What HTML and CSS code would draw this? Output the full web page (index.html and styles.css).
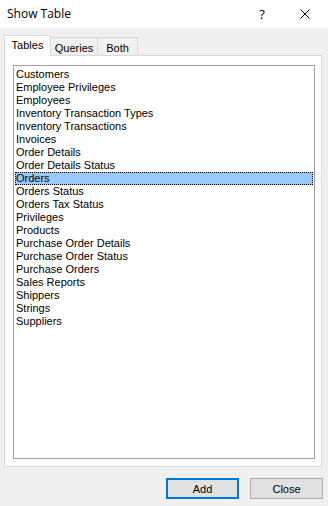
FILE: index.html
```html
<!DOCTYPE html>
<html>
<head>
<meta charset="utf-8">
<link rel="stylesheet" href="styles.css">
</head>
<body>
<div class="window">
  <div class="titlebar">
    <span class="title">Show Table</span>
    <span class="help">?</span>
    <span class="close"><svg width="10" height="10" viewBox="0 0 10 10"><path d="M0.5 0.5 L9.5 9.5 M9.5 0.5 L0.5 9.5" stroke="#000" stroke-width="1" fill="none"/></svg></span>
  </div>
  <div class="content">
    <div class="tabs">
      <div class="tab active">Tables</div>
      <div class="tab">Queries</div>
      <div class="tab">Both</div>
    </div>
    <div class="panel">
      <ul class="list">
        <li>Customers</li>
        <li>Employee Privileges</li>
        <li>Employees</li>
        <li>Inventory Transaction Types</li>
        <li>Inventory Transactions</li>
        <li>Invoices</li>
        <li>Order Details</li>
        <li>Order Details Status</li>
        <li class="selected">Orders</li>
        <li>Orders Status</li>
        <li>Orders Tax Status</li>
        <li>Privileges</li>
        <li>Products</li>
        <li>Purchase Order Details</li>
        <li>Purchase Order Status</li>
        <li>Purchase Orders</li>
        <li>Sales Reports</li>
        <li>Shippers</li>
        <li>Strings</li>
        <li>Suppliers</li>
      </ul>
    </div>
    <div class="buttons">
      <button class="btn default">Add</button>
      <button class="btn">Close</button>
    </div>
  </div>
</div>
</body>
</html>
```

FILE: styles.css
```css
html, body {
  margin: 0;
  padding: 0;
}
body {
  background: #f0f0f0;
  font-family: "Liberation Sans", Arial, sans-serif;
  font-size: 11px;
  color: #000;
}
.window {
  width: 328px;
  height: 506px;
  overflow: hidden;
}
.titlebar {
  height: 28px;
  background: #fff;
  display: flex;
  align-items: center;
}
.title {
  margin-left: 7px;
  font-family: "Open Sans", "Noto Sans", sans-serif;
  font-size: 12px;
  line-height: 16px;
  flex: 1;
}
.help {
  width: 40px;
  text-align: center;
  font-family: "Open Sans", "Noto Sans", sans-serif;
  font-size: 13px;
  line-height: 16px;
}
.close {
  width: 46px;
  display: flex;
  justify-content: center;
  align-items: center;
}
.close svg {
  display: block;
}
.content {
  padding: 7px 6px 0 4px;
}
.tabs {
  display: flex;
  align-items: flex-end;
  height: 20px;
  position: relative;
  z-index: 1;
}
.tab {
  box-sizing: border-box;
  height: 18px;
  padding-top: 4px;
  line-height: 13px;
  text-align: center;
  background: #f0f0f0;
  border-top: 1px solid #d9d9d9;
  border-right: 1px solid #d9d9d9;
}
.tab:nth-child(2) {
  width: 47px;
}
.tab:nth-child(3) {
  width: 40px;
}
.tab.active {
  width: 47px;
  height: 21px;
  padding-top: 3px;
  margin-bottom: -1px;
  background: #fff;
  border-left: 1px solid #d9d9d9;
}
.panel {
  box-sizing: border-box;
  width: 318px;
  height: 412px;
  background: #fff;
  border: 1px solid #d9d9d9;
  padding: 9px 6px 7px 8px;
}
.list {
  box-sizing: border-box;
  list-style: none;
  margin: 0;
  height: 394px;
  border: 1px solid #a0a0a0;
  background: #fff;
  padding: 2px 1px 0 1px;
}
.list li {
  height: 13px;
  line-height: 13px;
  padding-left: 1px;
  white-space: nowrap;
}
.list li.selected {
  background: #99c9ff;
  outline: 1px dotted #000;
  outline-offset: -1px;
}
.buttons {
  display: flex;
  justify-content: flex-end;
  gap: 11px;
  margin-top: 11px;
  margin-right: -1px;
}
.btn {
  box-sizing: border-box;
  width: 73px;
  height: 21px;
  margin: 0;
  padding: 0;
  background: #e1e1e1;
  border: 1px solid #adadad;
  font-family: "Liberation Sans", Arial, sans-serif;
  font-size: 11px;
  color: #000;
  display: flex;
  align-items: center;
  justify-content: center;
}
.btn.default {
  border: 2px solid #0078d7;
}
```
